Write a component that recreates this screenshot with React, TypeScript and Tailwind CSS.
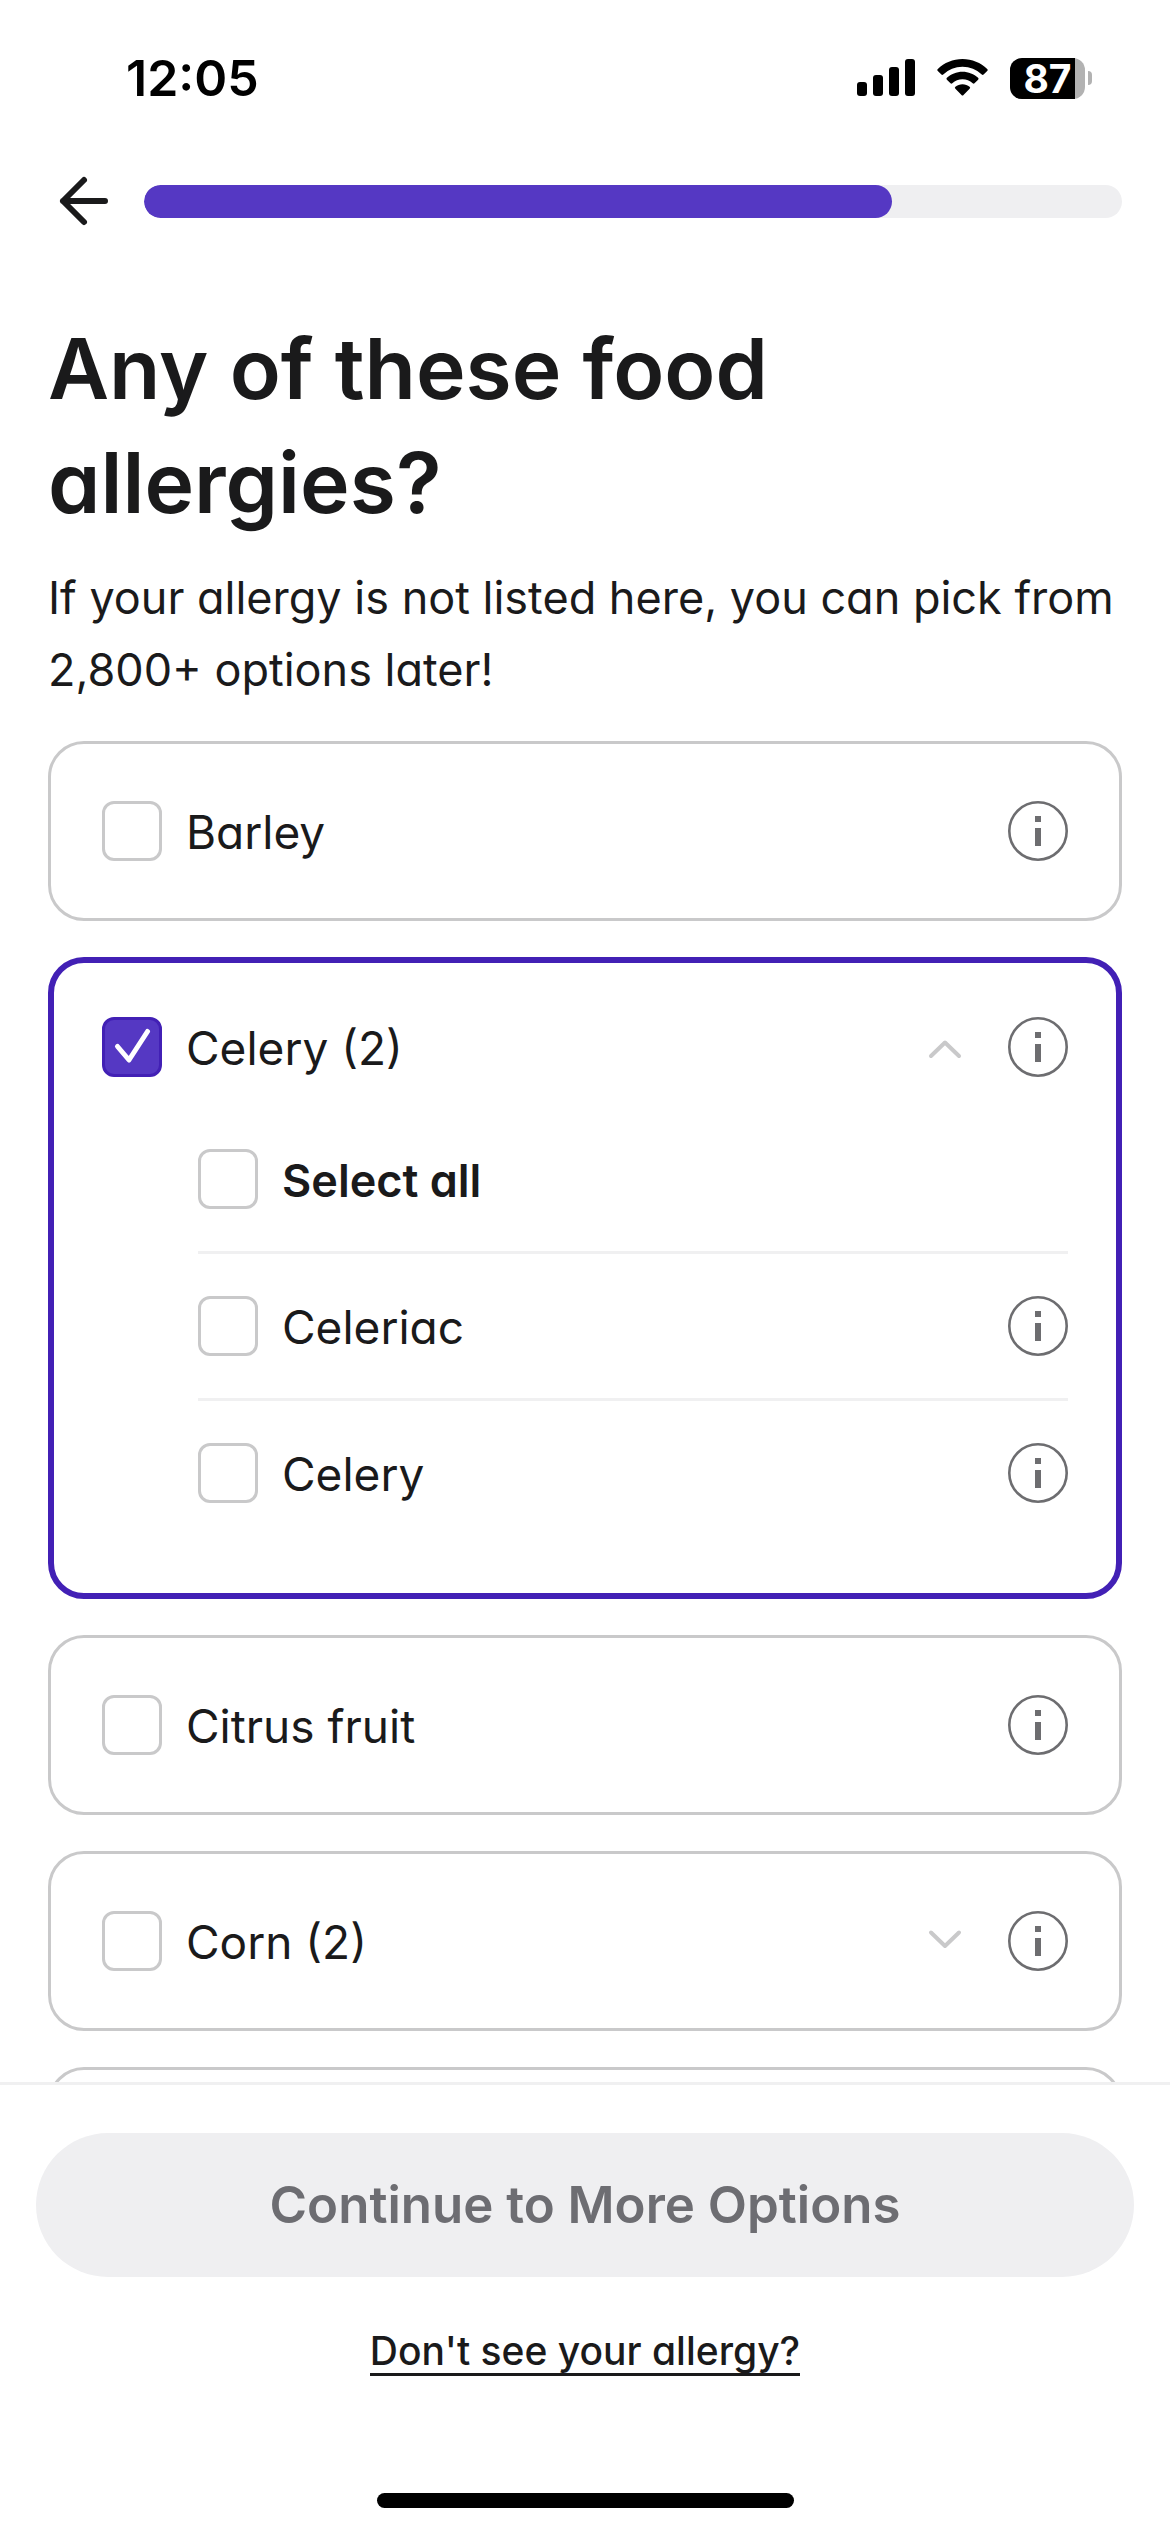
import { useState } from "react";

type Option = { id: string; label: string; strong?: boolean; info?: boolean };
type Allergy = { id: string; label: string; children?: Option[] };

const ALLERGIES: Allergy[] = [
  { id: "barley", label: "Barley" },
  {
    id: "celery",
    label: "Celery (2)",
    children: [
      { id: "celery-all", label: "Select all", strong: true },
      { id: "celeriac", label: "Celeriac", info: true },
      { id: "celery-stalk", label: "Celery", info: true },
    ],
  },
  { id: "citrus", label: "Citrus fruit" },
  {
    id: "corn",
    label: "Corn (2)",
    children: [
      { id: "corn-all", label: "Select all", strong: true },
      { id: "corn-kernel", label: "Corn", info: true },
    ],
  },
];

function StatusBar() {
  return (
    <div className="flex h-[156px] shrink-0 items-center justify-between pl-[126px] pr-[78px]">
      <span className="text-[50px] leading-none font-semibold text-black">12:05</span>
      <div className="flex items-center gap-[22px]">
        <svg className="h-[38px] w-[58px]" viewBox="0 0 58 38" aria-label="Signal">
          <rect x="0" y="23" width="10" height="14" rx="3" />
          <rect x="16" y="16" width="10" height="21" rx="3" />
          <rect x="32" y="8" width="10" height="29" rx="3" />
          <rect x="48" y="0" width="10" height="37" rx="3" />
        </svg>
        <svg className="h-[38px] w-[51px]" viewBox="0 0 51 38" aria-label="Wi-Fi">
          <path d="M25.5 0C35 0 43.800 3.700 50.200 10.100a1.300 1.300 0 0 1 0 1.900l-3.600 3.600a1.300 1.300 0 0 1-1.800 0A27.700 27.700 0 0 0 25.500 7.800 27.700 27.700 0 0 0 6.200 15.600a1.300 1.300 0 0 1-1.800 0L.8 12a1.300 1.300 0 0 1 0-1.900C7.200 3.700 16 0 25.500 0Z" />
          <path d="M25.500 12.700c6 0 11.500 2.300 15.600 6.100a1.300 1.300 0 0 1 0 1.900l-3.600 3.600a1.300 1.300 0 0 1-1.800 0 15.100 15.100 0 0 0-20.400 0 1.300 1.300 0 0 1-1.800 0l-3.600-3.600a1.300 1.300 0 0 1 0-1.900c4.100-3.800 9.600-6.100 15.600-6.100Z" />
          <path d="M25.500 25.200c2.700 0 5.200 1 7.100 2.600a1.300 1.300 0 0 1 0 2l-6.100 6.200a1.400 1.400 0 0 1-2 0l-6.100-6.200a1.300 1.300 0 0 1 0-2c1.900-1.600 4.400-2.600 7.100-2.600Z" />
        </svg>
        <div className="flex items-center gap-[3px]">
          <div className="relative flex h-[41px] w-[75px] items-center justify-center rounded-[12px] bg-[#b2b2b2]">
            <div className="absolute inset-y-0 left-0 w-[65px] rounded-l-[12px] bg-black" />
            <span className="relative text-[39px] leading-[41px] font-bold text-white">87</span>
          </div>
          <div className="h-[14px] w-[4px] rounded-r-full bg-[#b2b2b2]" />
        </div>
      </div>
    </div>
  );
}

function Checkbox({ id, checked, onChange }: { id: string; checked: boolean; onChange: () => void }) {
  return (
    <span className="relative size-[60px] shrink-0">
      <input
        id={id}
        type="checkbox"
        checked={checked}
        onChange={onChange}
        className="block size-[60px] appearance-none rounded-[12px] border-[3px] border-[#c9c9ca] bg-white checked:border-[#4220b5] checked:bg-[#5538c3]"
      />
      {checked && (
        <svg className="pointer-events-none absolute inset-0 size-full" viewBox="0 0 60 60" fill="none" stroke="white" strokeWidth="5" strokeLinecap="round" strokeLinejoin="round">
          <path d="M15.500 29.500 27 43 45.500 14.500" />
        </svg>
      )}
    </span>
  );
}

function InfoButton({ label }: { label: string }) {
  return (
    <button type="button" aria-label={`About ${label}`} className="size-[60px] shrink-0">
      <svg viewBox="0 0 60 60" className="size-full" fill="#6d6d70">
        <circle cx="30" cy="30" r="28.700" fill="none" stroke="#6d6d70" strokeWidth="2.600" />
        <rect x="27" y="15" width="6" height="6" />
        <rect x="27" y="27" width="6" height="18" />
      </svg>
    </button>
  );
}

function AllergyCard({
  item,
  checked,
  toggle,
}: {
  item: Allergy;
  checked: Set<string>;
  toggle: (id: string) => void;
}) {
  const active = checked.has(item.id);
  const open = active && !!item.children;
  return (
    <li
      className={
        active
          ? "rounded-[36px] border-[6px] border-[#4220b5] px-12 py-[54px]"
          : "rounded-[36px] border-[3px] border-[#c9c9ca] px-[51px] py-[57px]"
      }
    >
      <div className="flex items-center">
        <Checkbox id={item.id} checked={active} onChange={() => toggle(item.id)} />
        <label htmlFor={item.id} className="flex-1 pt-[3px] pl-6 text-[46px] leading-[57px]">
          {item.label}
        </label>
        {item.children && (
          <button type="button" aria-label={`Expand ${item.label}`} aria-expanded={open} className="mr-[33px] size-[60px]">
            <svg viewBox="0 0 60 60" className="size-full" fill="none" stroke="#c9c9ca" strokeWidth="4" strokeLinecap="round" strokeLinejoin="round">
              <path d={open ? "M16 39 30 25.500 44 39" : "M16 21.500 30 35 44 21.500"} />
            </svg>
          </button>
        )}
        <InfoButton label={item.label} />
      </div>
      {open && (
        <ul className="mt-[30px] -mb-1.5 divide-y-[3px] divide-[#f0f0f1] pl-24">
          {item.children!.map((child) => (
            <li key={child.id} className="flex items-center py-[42px]">
              <Checkbox id={child.id} checked={checked.has(child.id)} onChange={() => toggle(child.id)} />
              <label
                htmlFor={child.id}
                className={
                  child.strong
                    ? "flex-1 pt-[3px] pl-6 text-[45px] leading-[57px] font-semibold"
                    : "flex-1 pt-[3px] pl-6 text-[46px] leading-[57px]"
                }
              >
                {child.label}
              </label>
              {child.info && <InfoButton label={child.label} />}
            </li>
          ))}
        </ul>
      )}
    </li>
  );
}

export default function App() {
  const [checked, setChecked] = useState<Set<string>>(new Set(["celery"]));
  const toggle = (id: string) =>
    setChecked((prev) => {
      const next = new Set(prev);
      if (!next.delete(id)) next.add(id);
      return next;
    });

  return (
    <div className="flex h-screen flex-col bg-white font-['Inter',sans-serif] text-[#1a1a1b] [font-feature-settings:'cv11']">
      <StatusBar />
      <header className="flex shrink-0 items-center px-12 pt-[9px]">
        <button type="button" aria-label="Back" className="mr-6 size-[72px]">
          <svg viewBox="0 0 72 72" className="size-full" fill="none" stroke="#1a1a1b" strokeWidth="6" strokeLinecap="round" strokeLinejoin="round">
            <path d="M57 36H15M36 15 15 36l21 21" />
          </svg>
        </button>
        <div role="progressbar" aria-label="Progress" aria-valuenow={76} className="h-[33px] flex-1 overflow-hidden rounded-full bg-[#efeff1]">
          <div className="h-full rounded-full bg-[#5538c3]" style={{ width: "76.5%" }} />
        </div>
      </header>
      <main className="min-h-0 flex-1 overflow-y-auto px-12 pt-[75px] [scrollbar-width:none]">
        <h1 className="max-w-[900px] text-[84px] leading-[114px] font-semibold">
          Any of these food allergies?
        </h1>
        <p className="mt-[22px] text-[45px] leading-[72px]">
          If your allergy is not listed here, you can pick from 2,800+ options later!
        </p>
        <ul className="mt-[35px] flex flex-col gap-9 pb-9">
          {ALLERGIES.map((item) => (
            <AllergyCard key={item.id} item={item} checked={checked} toggle={toggle} />
          ))}
          <li aria-hidden="true" className="h-[180px] rounded-[36px] border-[3px] border-[#c9c9ca]" />
        </ul>
      </main>
      <footer className="flex shrink-0 flex-col items-center border-t-[3px] border-[#f0f0f1] px-9 pt-12 pb-6">
        <button type="button" className="h-36 w-full rounded-full bg-[#efeff1] text-[51px] font-semibold text-[#6d6d72]">
          Continue to More Options
        </button>
        <a href="#search" className="mt-[52px] border-b-[3px] border-[#1a1a1b] text-[39px] leading-[44px] font-medium">
          Don't see your allergy?
        </a>
        <div className="mt-[117px] h-[15px] w-[417px] rounded-full bg-black" />
      </footer>
    </div>
  );
}
